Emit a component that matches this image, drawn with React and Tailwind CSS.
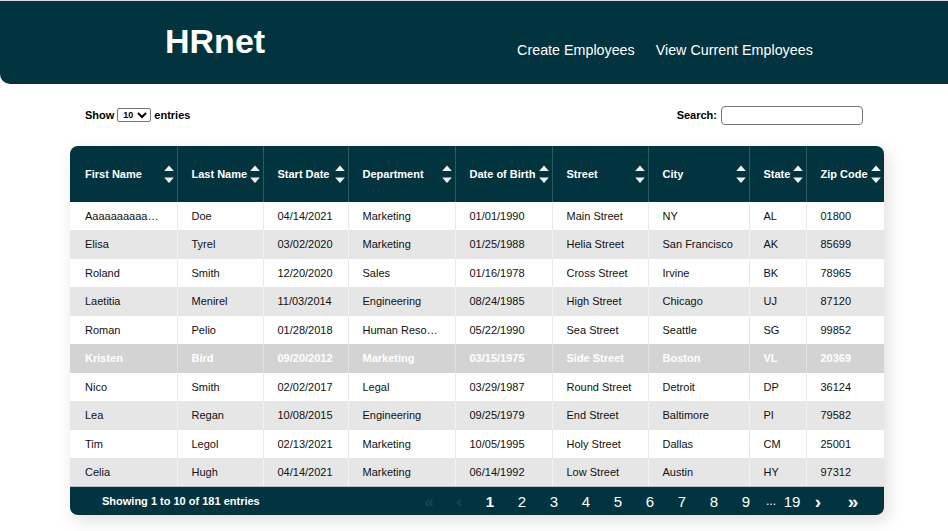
import React from "react";

const columns = [
  { label: "First Name", key: "first", width: 107 },
  { label: "Last Name", key: "last", width: 86 },
  { label: "Start Date", key: "start", width: 85 },
  { label: "Department", key: "dept", width: 107 },
  { label: "Date of Birth", key: "dob", width: 97 },
  { label: "Street", key: "street", width: 96 },
  { label: "City", key: "city", width: 101 },
  { label: "State", key: "state", width: 57 },
  { label: "Zip Code", key: "zip", width: 78 },
];

const employees = [
  { first: "Aaaaaaaaaaaaaaaaa", last: "Doe", start: "04/14/2021", dept: "Marketing", dob: "01/01/1990", street: "Main Street", city: "NY", state: "AL", zip: "01800" },
  { first: "Elisa", last: "Tyrel", start: "03/02/2020", dept: "Marketing", dob: "01/25/1988", street: "Helia Street", city: "San Francisco", state: "AK", zip: "85699" },
  { first: "Roland", last: "Smith", start: "12/20/2020", dept: "Sales", dob: "01/16/1978", street: "Cross Street", city: "Irvine", state: "BK", zip: "78965" },
  { first: "Laetitia", last: "Menirel", start: "11/03/2014", dept: "Engineering", dob: "08/24/1985", street: "High Street", city: "Chicago", state: "UJ", zip: "87120" },
  { first: "Roman", last: "Pelio", start: "01/28/2018", dept: "Human Resources", dob: "05/22/1990", street: "Sea Street", city: "Seattle", state: "SG", zip: "99852" },
  { first: "Kristen", last: "Bird", start: "09/20/2012", dept: "Marketing", dob: "03/15/1975", street: "Side Street", city: "Boston", state: "VL", zip: "20369" },
  { first: "Nico", last: "Smith", start: "02/02/2017", dept: "Legal", dob: "03/29/1987", street: "Round Street", city: "Detroit", state: "DP", zip: "36124" },
  { first: "Lea", last: "Regan", start: "10/08/2015", dept: "Engineering", dob: "09/25/1979", street: "End Street", city: "Baltimore", state: "PI", zip: "79582" },
  { first: "Tim", last: "Legol", start: "02/13/2021", dept: "Marketing", dob: "10/05/1995", street: "Holy Street", city: "Dallas", state: "CM", zip: "25001" },
  { first: "Celia", last: "Hugh", start: "04/14/2021", dept: "Marketing", dob: "06/14/1992", street: "Low Street", city: "Austin", state: "HY", zip: "97312" },
];

const rowHeights = ["h-[28px]", "h-[29px]", "h-[28px]", "h-[29px]", "h-[28px]", "h-[29px]", "h-[28px]", "h-[29px]", "h-[28px]", "h-[28px]"];

const SortIcon = () => (
  <svg width="10" height="19" viewBox="0 0 10 19" className="shrink-0">
    <path d="M5 0.5 L9.8 6 L0.2 6 Z" fill="#f2f2f2" strokeLinejoin="round" />
    <path d="M0.2 12.5 L9.8 12.5 L5 18 Z" fill="#f2f2f2" strokeLinejoin="round" />
  </svg>
);

const pages = [
  { label: "«", w: "w-[30px]", cls: "text-[#1d4651] text-[17px] font-bold" },
  { label: "‹", w: "w-[30px]", cls: "text-[#1d4651] text-[17px] font-bold" },
  { label: "1", w: "w-[32px]", cls: "text-white font-bold" },
  { label: "2", w: "w-[32px]", cls: "text-white" },
  { label: "3", w: "w-[32px]", cls: "text-white" },
  { label: "4", w: "w-[32px]", cls: "text-white" },
  { label: "5", w: "w-[32px]", cls: "text-white" },
  { label: "6", w: "w-[32px]", cls: "text-white" },
  { label: "7", w: "w-[32px]", cls: "text-white" },
  { label: "8", w: "w-[32px]", cls: "text-white" },
  { label: "9", w: "w-[32px]", cls: "text-white" },
  { label: "...", w: "w-[18px]", cls: "text-white text-[12px]" },
  { label: "19", w: "w-[24px]", cls: "text-white" },
  { label: "›", w: "w-[28px]", cls: "text-white text-[19px] font-bold" },
  { label: "»", w: "w-[42px]", cls: "text-white text-[19px] font-bold" },
];

export default function App() {
  return (
    <div className="min-h-[531px] bg-white font-['Liberation_Sans',Arial,sans-serif] text-black">
      <div className="h-px bg-[#dcdcdc]" />
      {/* Top bar */}
      <header className="h-[83px] bg-[#023440] rounded-bl-[10px] flex items-start">
        <h1 className="ml-[165px] mt-[20px] text-[34px] leading-[40px] font-bold text-white">HRnet</h1>
        <nav className="ml-[252px] mt-[40px] flex gap-[21px] text-[14.3px] leading-[18px] text-white">
          <a href="#">Create Employees</a>
          <a href="#">View Current Employees</a>
        </nav>
      </header>

      {/* Controls */}
      <div className="flex items-center justify-between pl-[85px] pr-[85px] mt-[21px] h-[20px]">
        <label className="flex items-center gap-[3px] text-[11px] font-bold">
          Show
          <select className="h-[14px] w-[34px] text-[9px] leading-none border border-[#767676] rounded-[2px] px-[1px] bg-white">
            <option>10</option>
          </select>
          entries
        </label>
        <label className="flex items-center gap-[4px] text-[11px] font-bold">
          Search:
          <input type="text" className="w-[142px] h-[19px] border border-[#767676] rounded-[4px] bg-white" />
        </label>
      </div>

      {/* Table */}
      <div className="ml-[70px] mt-[21px] w-[814px] rounded-[8px] overflow-hidden shadow-[4px_6px_18px_rgba(0,0,0,0.13)]">
        <table className="table-fixed border-collapse w-full">
          <colgroup>
            {columns.map((c) => (
              <col key={c.key} style={{ width: c.width }} />
            ))}
          </colgroup>
          <thead>
            <tr className="bg-[#023440] h-[56px]">
              {columns.map((c, i) => (
                <th
                  key={c.key}
                  className={`${i === 0 ? "pl-[15px]" : "pl-[14px]"} pr-[3px] text-left text-[11px] font-bold text-white ${i < columns.length - 1 ? "border-r border-[#2e5a64]" : ""}`}
                >
                  <div className="flex items-center justify-between">
                    <span className="whitespace-nowrap">{c.label}</span>
                    <SortIcon />
                  </div>
                </th>
              ))}
            </tr>
          </thead>
          <tbody>
            {employees.map((e, r) => {
              const selected = r === 5;
              const rowBg = selected ? "bg-[#d3d3d3]" : r % 2 === 1 ? "bg-[#e6e6e6]" : "bg-white";
              const border = selected ? "border-[#e2e2e2]" : r % 2 === 1 ? "border-[#f3f3f3]" : "border-[#e8e8e8]";
              return (
                <tr key={r} className={`${rowBg} ${rowHeights[r]}`}>
                  {columns.map((c, i) => (
                    <td
                      key={c.key}
                      className={`${i === 0 ? "pl-[15px]" : "pl-[14px]"} pr-[12px] text-[11px] truncate ${selected ? "text-white font-bold" : "text-[#111]"} ${i < columns.length - 1 ? `border-r ${border}` : ""}`}
                    >
                      {e[c.key]}
                    </td>
                  ))}
                </tr>
              );
            })}
          </tbody>
        </table>

        {/* Footer */}
        <div className="h-[29px] bg-[#023440] border-t border-[#b8c2c4] flex items-center">
          <span className="ml-[32px] text-[11px] font-bold text-white">Showing 1 to 10 of 181 entries</span>
          <div className="ml-auto mr-[10px] flex items-center text-[15px] leading-none">
            {pages.map((p, i) => (
              <span key={i} className={`${p.w} text-center ${p.cls}`}>{p.label}</span>
            ))}
          </div>
        </div>
      </div>
    </div>
  );
}
